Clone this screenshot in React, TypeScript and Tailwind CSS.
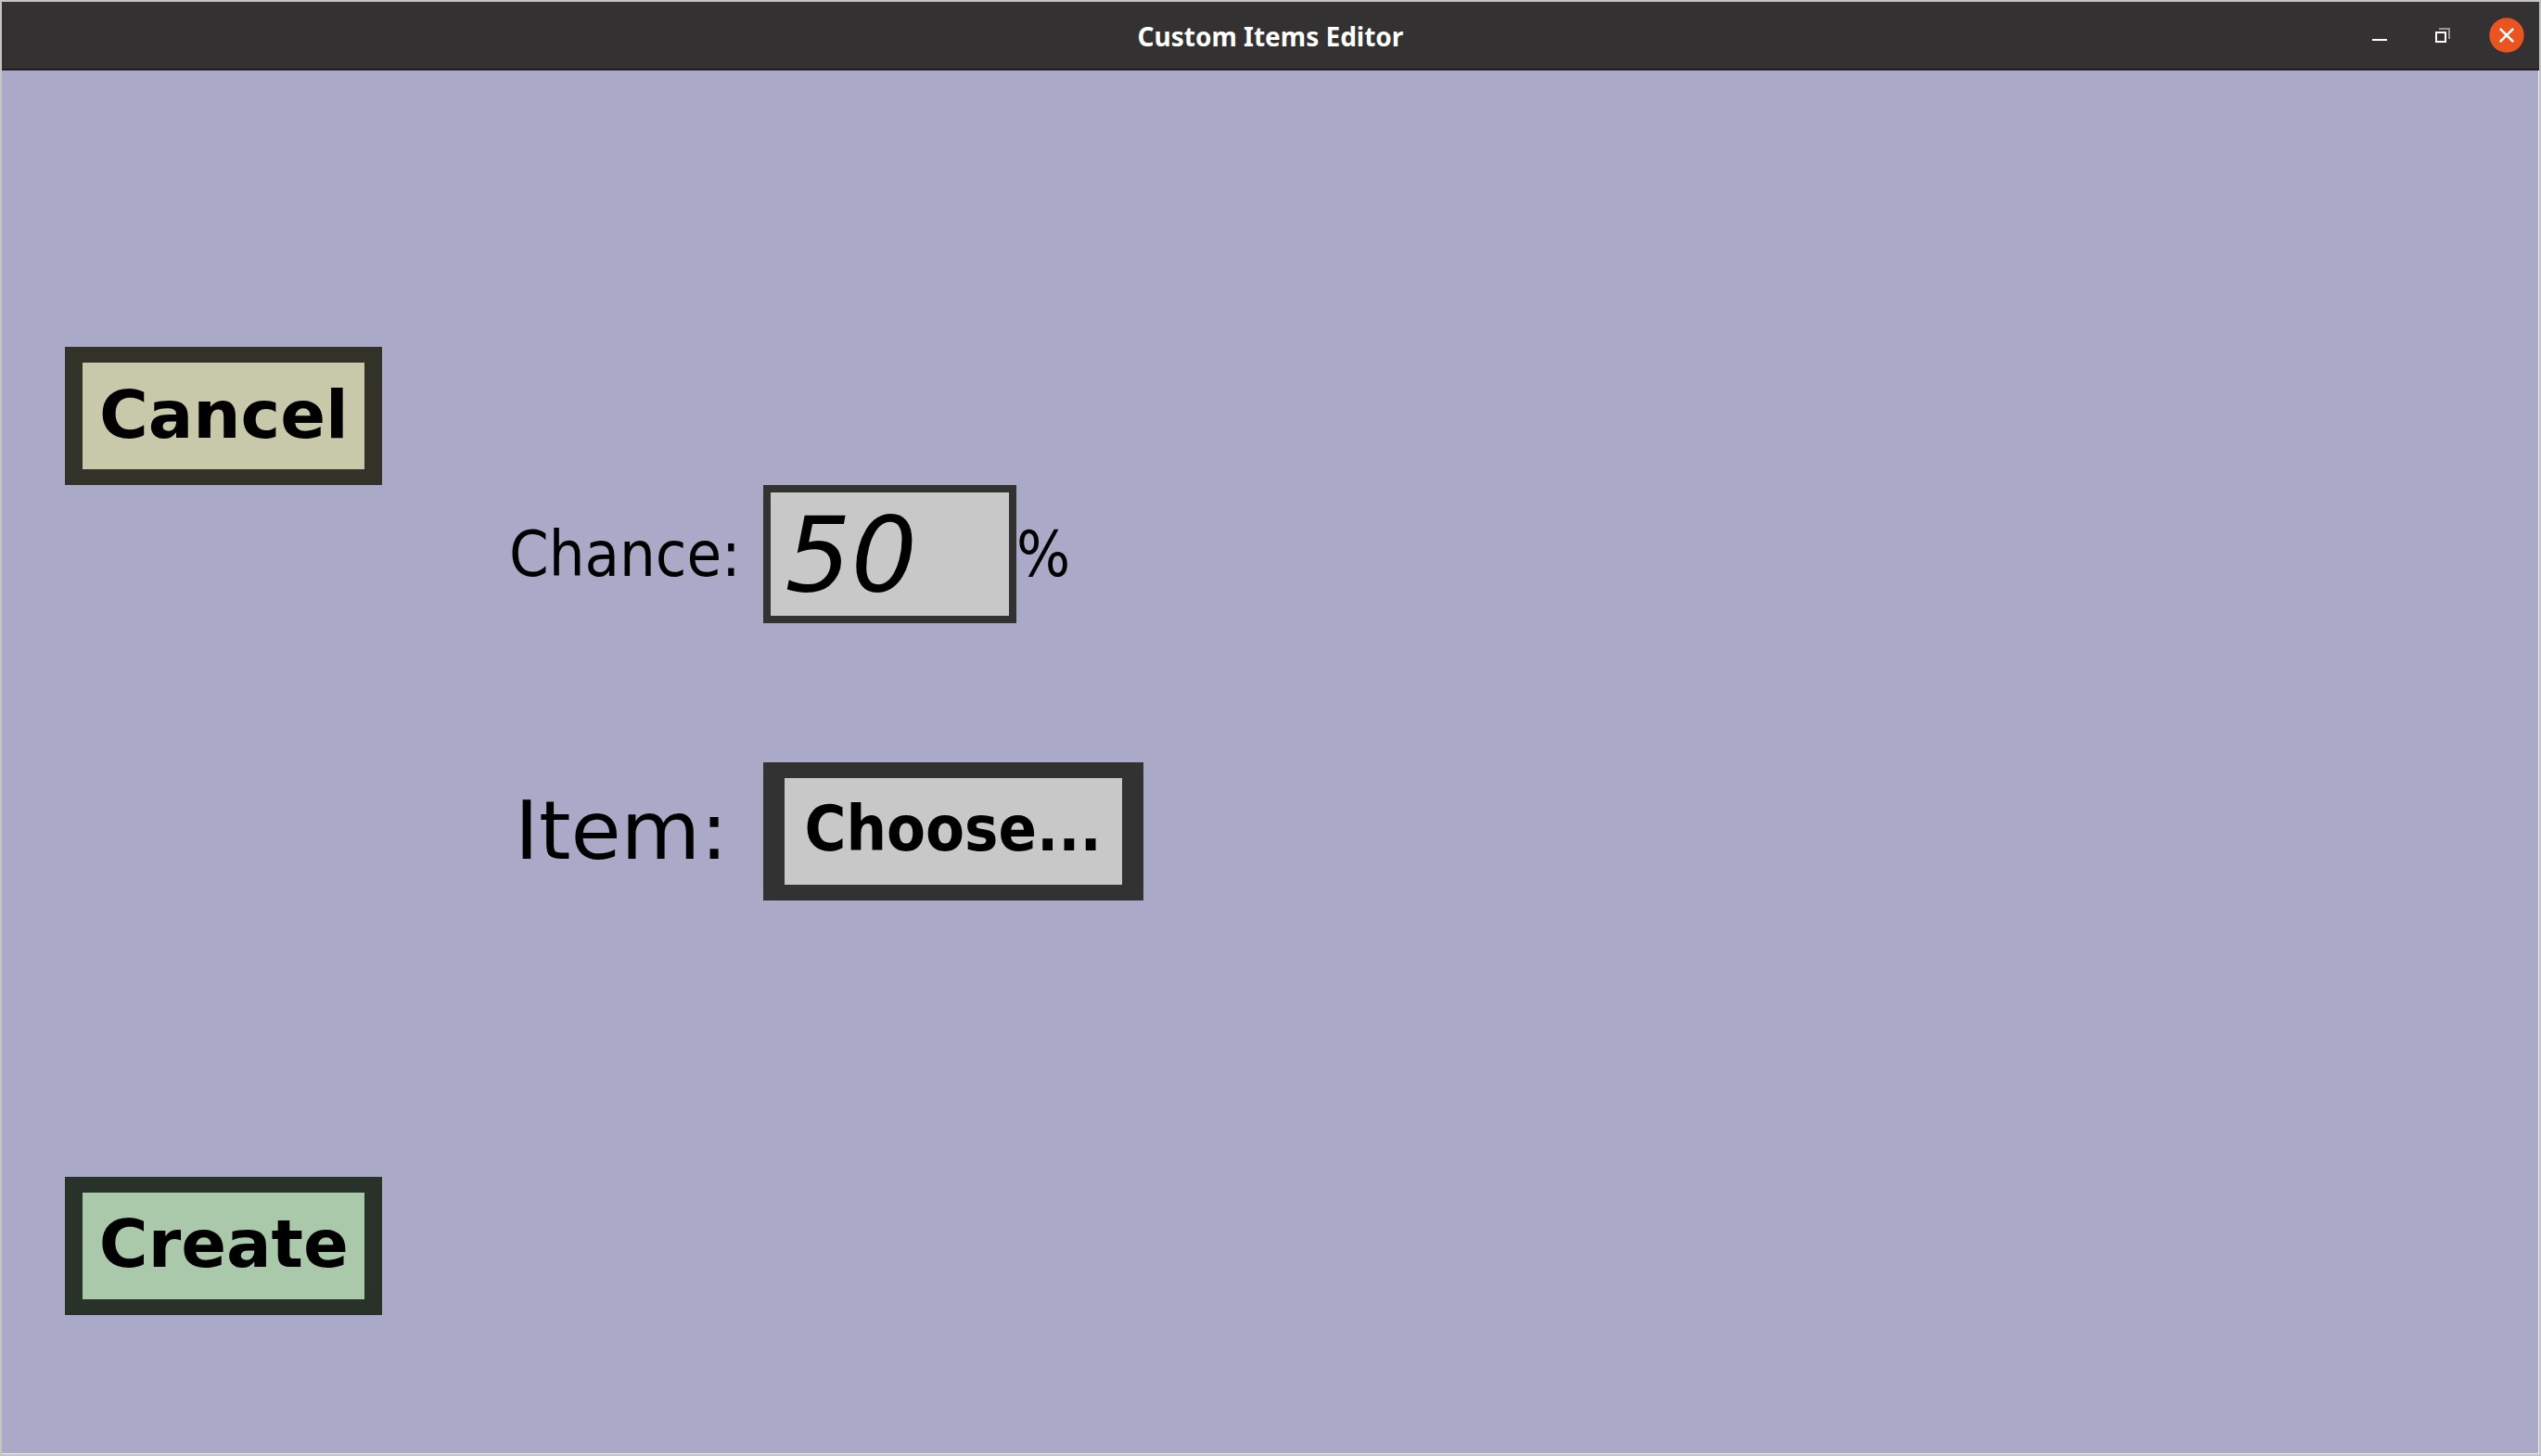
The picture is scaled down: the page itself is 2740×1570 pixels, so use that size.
import type { ReactNode } from "react";

type FrameButtonProps = {
  id?: string;
  className: string;
  children: ReactNode;
};

function FrameButton({ id, className, children }: FrameButtonProps) {
  return (
    <button
      id={id}
      type="button"
      className={`flex items-center justify-center border-y-[17px] pb-1 leading-none font-bold whitespace-nowrap text-black ${className}`}
    >
      {children}
    </button>
  );
}

function TitleBar() {
  return (
    <header className="grid h-[74px] shrink-0 grid-cols-[1fr_auto_1fr] items-center border-b-2 border-[#201e21] bg-[#333132]">
      <h1 className="col-start-2 pt-0.5 font-['Noto_Sans',sans-serif] text-[28px] leading-none font-bold text-white">
        Custom Items Editor
      </h1>
      <div className="flex items-center justify-end gap-8 pr-4">
        <button type="button" aria-label="Minimize" className="size-9">
          <svg viewBox="0 0 36 36" className="size-9" shapeRendering="crispEdges">
            <rect x="10" y="22" width="16" height="2" fill="#fff" />
          </svg>
        </button>
        <button type="button" aria-label="Restore" className="size-9">
          <svg viewBox="0 0 36 36" className="size-9" shapeRendering="crispEdges">
            <path d="M14 11h11v11" fill="none" stroke="#969595" strokeWidth="2" />
            <rect x="11" y="15" width="10" height="10" fill="none" stroke="#fff" strokeWidth="2" />
          </svg>
        </button>
        <button type="button" aria-label="Close" className="size-[38px]">
          <svg viewBox="0 0 38 38" className="size-[38px]">
            <circle cx="19" cy="19" r="18.7" fill="#e95420" />
            <path d="M11.8 11.8l14.4 14.4M26.2 11.8L11.8 26.2" stroke="#fff" strokeWidth="2.6" />
          </svg>
        </button>
      </div>
    </header>
  );
}

export default function App() {
  return (
    <div className="flex h-screen flex-col border-2 border-[#c4c4c2] bg-[#aaaac8] font-['DejaVu_Sans',sans-serif]">
      <TitleBar />
      <main className="grid min-h-0 flex-1 grid-cols-[repeat(40,minmax(0,1fr))] grid-rows-10 border-r border-b border-[#efeef2] text-black">
        <FrameButton className="col-start-2 col-end-7 row-start-3 border-x-[19px] border-[#323228] bg-[#c8c8aa] text-[72px]">
          Cancel
        </FrameButton>

        <label
          htmlFor="chance"
          className="col-start-9 col-end-13 row-start-4 self-center font-['DejaVu_Sans_Condensed',sans-serif] text-[68px] leading-none whitespace-nowrap"
        >
          Chance:
        </label>
        <input
          id="chance"
          type="text"
          inputMode="numeric"
          defaultValue="50"
          className="col-start-13 col-end-17 row-start-4 min-w-0 border-8 border-[#323232] bg-[#c8c8c8] px-4 text-[112px] leading-none italic outline-none"
        />
        <span className="col-start-17 col-end-19 row-start-4 self-center font-['DejaVu_Sans_Condensed',sans-serif] text-[68px] leading-none">
          %
        </span>

        <label
          htmlFor="item"
          className="col-start-9 col-end-13 row-start-6 self-center pl-1.5 text-[88px] leading-none whitespace-nowrap"
        >
          Item:
        </label>
        <FrameButton
          id="item"
          className="col-start-13 col-end-19 row-start-6 border-x-[23px] border-[#323232] bg-[#c8c8c8] font-['DejaVu_Sans_Condensed',sans-serif] text-[68px]"
        >
          Choose...
        </FrameButton>

        <FrameButton className="col-start-2 col-end-7 row-start-9 border-x-[19px] border-[#283228] bg-[#aac8aa] text-[72px]">
          Create
        </FrameButton>
      </main>
    </div>
  );
}
